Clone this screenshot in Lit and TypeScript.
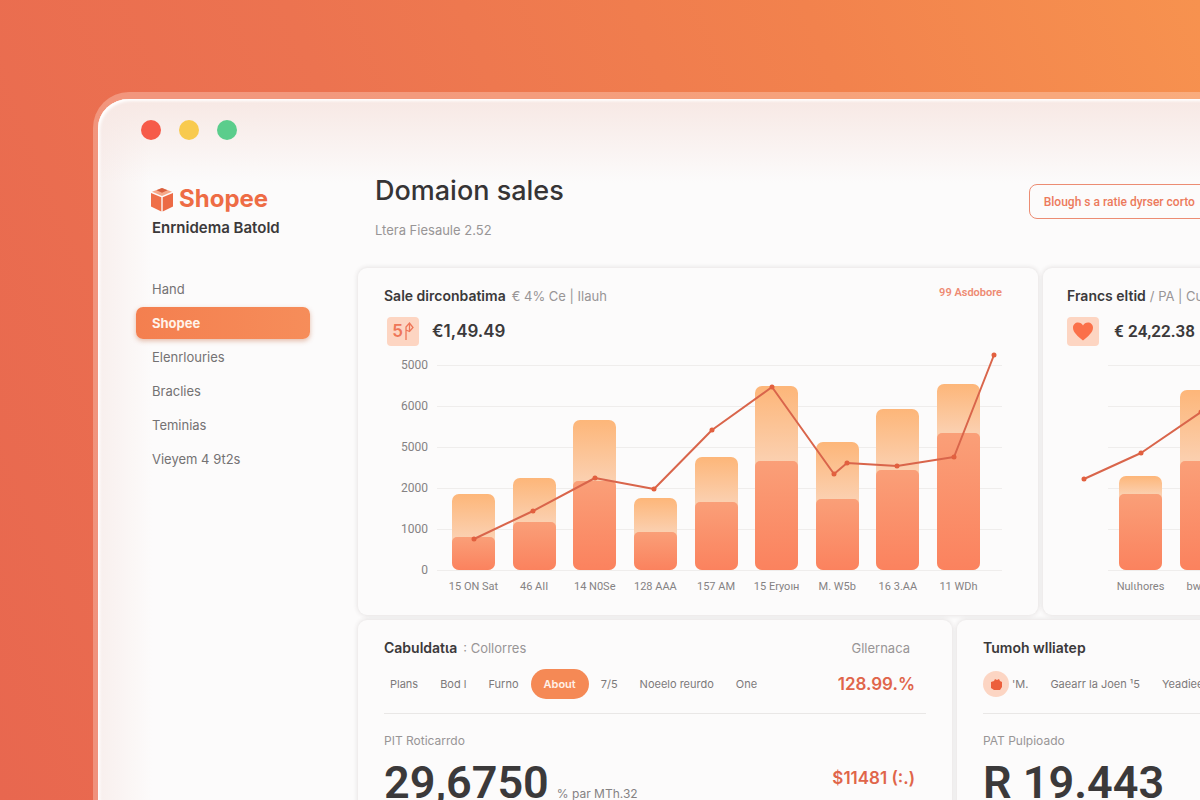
import { LitElement, html, svg, css } from "lit";
import { customElement, property, state } from "lit/decorators.js";
import { classMap } from "lit/directives/class-map.js";

type Bar = { label: string; total: number; part: number };
type Point = [number, number];

/** Stacked bars with a trend line; bar values are percentages of the plot height. */
@customElement("sales-chart")
class SalesChart extends LitElement {
  @property({ attribute: false }) bars: Bar[] = [];
  @property({ attribute: false }) ticks: string[] = [];
  @property({ attribute: false }) line: Point[] = [];
  @property({ attribute: false }) box: Point = [565, 205];

  static styles = css`
    :host {
      display: flex;
      gap: 9px;
      font-family: Roboto, "Liberation Sans", sans-serif;
      color: #858283;
    }
    .ticks {
      width: 32px;
      height: 221px;
      margin-top: -8px;
      display: flex;
      flex-direction: column;
      justify-content: space-between;
      text-align: right;
      font-size: 12px;
      line-height: 16px;
    }
    .area {
      flex: 1;
      min-width: 0;
    }
    .plot {
      display: grid;
      height: 205px;
    }
    .plot > * {
      grid-area: 1 / 1;
    }
    .grid {
      display: flex;
      flex-direction: column;
      justify-content: space-between;
      margin-bottom: -1px;
    }
    .rule {
      height: 1px;
      background: #efedec;
    }
    .bars,
    .labels {
      display: flex;
      justify-content: space-between;
      padding: var(--bars-inset, 0 22px 0 15px);
    }
    .bar {
      width: 43px;
      align-self: end;
      display: flex;
      align-items: end;
      border-radius: 7px;
      background: linear-gradient(#fdb679, #fbd0b0 var(--seam));
      overflow: hidden;
    }
    .part {
      width: 100%;
      border-radius: 5px;
      background: linear-gradient(#fa9f78, #fb825e);
    }
    svg {
      width: 100%;
      height: 100%;
      overflow: visible;
    }
    path {
      fill: none;
      stroke: #d9654b;
      stroke-width: 2;
      stroke-linejoin: round;
      vector-effect: non-scaling-stroke;
    }
    .dots {
      stroke: #e2603f;
      stroke-width: 5;
      stroke-linecap: round;
    }
    .labels {
      padding-top: 9px;
      font-size: 11px;
      line-height: 16px;
    }
    .label {
      width: 43px;
      display: flex;
      justify-content: center;
      white-space: nowrap;
    }
  `;

  render() {
    const [w, h] = this.box;
    return html`
      <div class="ticks">${this.ticks.map((t) => html`<span>${t}</span>`)}</div>
      <div class="area">
        <div class="plot">
          <div class="grid">${[0, 1, 2, 3, 4, 5].map(() => html`<div class="rule"></div>`)}</div>
          <div class="bars">
            ${this.bars.map((b) => {
              const share = (b.part / b.total) * 100;
              return html`<div class="bar" style="height:${b.total}%;--seam:${100 - share}%">
                <div class="part" style="height:${share}%"></div>
              </div>`;
            })}
          </div>
          <svg viewBox="0 0 ${w} ${h}" preserveAspectRatio="none" aria-hidden="true">
            ${svg`<path d="M${this.line.map((p) => p.join(" ")).join("L")}"></path>
            <path class="dots" d="${this.line.map((p) => `M${p.join(" ")}h0.01`).join("")}"></path>`}
          </svg>
        </div>
        <div class="labels">${this.bars.map((b) => html`<span class="label">${b.label}</span>`)}</div>
      </div>
    `;
  }
}

const SALES: Bar[] = [
  { label: "15 ON Sat", total: 37, part: 16 },
  { label: "46 AII", total: 45, part: 23.5 },
  { label: "14 N0Se", total: 73, part: 43.5 },
  { label: "128 AAA", total: 35, part: 18.5 },
  { label: "157 AM", total: 55, part: 33 },
  { label: "15 Eryoıн", total: 90, part: 53 },
  { label: "M. W5b", total: 62.5, part: 34.5 },
  { label: "16 3.AA", total: 78.5, part: 49 },
  { label: "11 WDh", total: 90.5, part: 67 },
];

const SALES_LINE: Point[] = [
  [37, 174], [96, 146], [158, 113], [217, 124], [275, 65], [335, 22],
  [397, 109], [410, 98], [460, 101], [517, 92], [557, -10],
];

const FRANCS: Bar[] = [
  { label: "Nulιhores", total: 46, part: 37 },
  { label: "bwera", total: 88, part: 53 },
  { label: "Juen", total: 70, part: 45 },
  { label: "Bral", total: 58, part: 30 },
  { label: "Tem", total: 80, part: 50 },
];

const FRANCS_LINE: Point[] = [[-24, 114], [33, 88], [93, 47], [155, 70], [215, 30], [280, 52]];

@customElement("app-root")
class AppRoot extends LitElement {
  @state() private page = "Shopee";
  @state() private tab = "About";

  static styles = css`
    :host {
      display: flex;
      box-sizing: border-box;
      height: 100vh;
      padding: 92px 0 0 93px;
      overflow: hidden;
      background: linear-gradient(68deg, #e8674f 0%, #ec7350 40%, #f2824d 74%, #f7924f 100%);
      font-family: Inter, "Liberation Sans", sans-serif;
      color: #3b393a;
    }
    * {
      box-sizing: border-box;
    }
    h1,
    h2,
    p {
      margin: 0;
      font-weight: 400;
    }
    button {
      font: inherit;
      border: 0;
      background: none;
      padding: 0;
      text-align: left;
      cursor: pointer;
    }
    .window {
      flex: none;
      width: calc(100% + 312px);
      border: solid rgba(255, 225, 215, 0.34);
      border-width: 7px 5px 0;
      border-radius: 36px 36px 0 0;
      background:
        linear-gradient(#f7e8e4, rgba(252, 251, 251, 0) 84px),
        linear-gradient(90deg, #f8efed, rgba(252, 251, 251, 0) 54px),
        #fcfbfb;
      background-clip: padding-box;
      box-shadow: inset 2px 2px 3px #ffffff;
    }
    .lights {
      display: flex;
      gap: 18px;
      padding: 21px 0 0 43px;
    }
    .light {
      width: 20px;
      height: 20px;
      border-radius: 50%;
    }
    .red {
      background: #f65b49;
    }
    .yellow {
      background: #f8ca4e;
    }
    .green {
      background: #5bcd8c;
    }
    .body {
      display: flex;
      gap: 48px;
      padding: 13px 24px 0 38px;
    }
    .side {
      width: 174px;
      padding-top: 31px;
    }
    .logo {
      display: flex;
      align-items: center;
      gap: 5px;
      padding-left: 14px;
      font-size: 24px;
      line-height: 30px;
      font-weight: 700;
      color: #ee6c45;
    }
    .logo svg {
      width: 24px;
      height: 25px;
    }
    .shop {
      padding-left: 16px;
      font-size: 15px;
      line-height: 28px;
      font-weight: 600;
      white-space: nowrap;
    }
    .nav {
      display: flex;
      flex-direction: column;
      gap: 2px;
      margin-top: 31px;
      font-size: 13px;
    }
    .nav a {
      line-height: 32px;
      padding: 0 16px;
      color: #747273;
      text-decoration: none;
      border-radius: 7px;
    }
    .nav a.on {
      background: linear-gradient(90deg, #f47f4f, #f68d5a);
      color: #fff3ea;
      font-weight: 700;
      box-shadow: 0 2px 5px rgba(200, 110, 70, 0.45);
    }
    .main {
      flex: 1;
      min-width: 0;
    }
    .head {
      display: flex;
      justify-content: space-between;
      align-items: start;
      height: 115px;
      padding-left: 17px;
    }
    h1 {
      font-size: 27px;
      line-height: 36px;
      padding-top: 20px;
      font-weight: 500;
      color: #363435;
    }
    .sub {
      font-size: 13px;
      line-height: 20px;
      padding-top: 11px;
      color: #989596;
    }
    .export {
      width: 41%;
      height: 35px;
      margin-top: 31px;
      padding: 0 14px;
      border: 1px solid #ec8c73;
      border-radius: 8px;
      color: #ec7a5c;
      font-family: Roboto, "Liberation Sans", sans-serif;
      font-size: 12px;
      font-weight: 500;
      white-space: nowrap;
    }
    .row {
      display: grid;
      gap: 5px;
      margin-bottom: 5px;
    }
    .charts {
      grid-template-columns: 680fr 440fr;
    }
    .totals {
      grid-template-columns: 594fr 526fr;
    }
    .card {
      min-width: 0;
      border-radius: 9px;
      background: #fcfbfb;
      box-shadow: 0 0 4px 1px rgba(60, 50, 50, 0.11);
      padding: 17px 36px 20px 26px;
    }
    .card.narrow {
      padding-left: 24px;
    }
    .title {
      display: flex;
      align-items: baseline;
      gap: 6px;
      white-space: nowrap;
      font-size: 14px;
      line-height: 22px;
    }
    .narrow .title {
      gap: 4px;
    }
    h2 {
      font-size: 14px;
      line-height: 22px;
      font-weight: 600;
    }
    .muted {
      color: #989596;
      font-size: 13px;
    }
    .more {
      align-self: start;
      margin-left: auto;
      font-family: Roboto, "Liberation Sans", sans-serif;
      font-size: 11px;
      line-height: 16px;
      font-weight: 600;
      color: #ee8a72;
      text-decoration: none;
    }
    .stat {
      display: flex;
      align-items: center;
      gap: 13px;
      height: 28px;
      margin: 10px 0 20px 3px;
      font-size: 17px;
      font-weight: 600;
    }
    .narrow .stat {
      margin-left: 0;
      font-family: Roboto, "Liberation Sans", sans-serif;
      gap: 15px;
    }
    .badge {
      display: flex;
      align-items: center;
      justify-content: center;
      width: 32px;
      height: 29px;
      border-radius: 4px;
      background: #fdd5c2;
      color: #ee7658;
      font-size: 17px;
      font-weight: 600;
    }
    .badge .mark {
      width: 11px;
      height: 20px;
    }
    .heart {
      width: 22px;
      height: 19px;
    }
    .wide-chart {
      margin-left: 12px;
    }
    .short-chart {
      --bars-inset: 0 41px 0 11px;
    }
    .tabs {
      display: flex;
      align-items: center;
      gap: 2px;
      flex: 1;
      margin-left: -4px;
      font-size: 11px;
      color: #7c797a;
    }
    .tabs button {
      height: 30px;
      padding: 0 10px;
      color: inherit;
      white-space: nowrap;
      border-radius: 15px;
    }
    .tabs button.on {
      padding: 0 13px;
      background: #f58955;
      color: #fff1e8;
      font-weight: 600;
    }
    .line {
      display: flex;
      align-items: center;
      height: 30px;
      margin-top: 10px;
    }
    .divided {
      padding-bottom: 14px;
      border-bottom: 1px solid #e9e7e6;
      height: 45px;
    }
    .total {
      padding: 17px 26px 20px 26px;
    }
    .total .right {
      margin: 0 16px 0 auto;
    }
    .total .rate {
      margin-right: 11px;
      font-size: 17px;
      font-weight: 600;
      color: #e0654a;
    }
    .small {
      font-size: 12px;
      line-height: 20px;
      margin-top: 17px;
      color: #989596;
    }
    .figure {
      display: flex;
      align-items: baseline;
      gap: 8px;
      margin-top: 6px;
      white-space: nowrap;
    }
    .big {
      font-family: Roboto, "Liberation Sans", sans-serif;
      font-size: 45px;
      line-height: 52px;
      font-weight: 600;
    }
    .unit {
      font-size: 12px;
      line-height: 16px;
      color: #858283;
    }
    .money {
      align-self: start;
      line-height: 42px;
    }
    .disc {
      flex: none;
      display: flex;
      align-items: center;
      justify-content: center;
      width: 26px;
      height: 26px;
      border-radius: 50%;
      background: #fcd5c3;
      margin-right: -3px;
    }
    .disc svg {
      width: 13px;
      height: 13px;
    }
  `;

  private go(e: Event, page: string) {
    e.preventDefault();
    this.page = page;
  }

  private link(name: string) {
    return html`<a href="#" class=${classMap({ on: this.page === name })} @click=${(e: Event) => this.go(e, name)}>${name}</a>`;
  }

  private tabButton(name: string) {
    return html`<button class=${classMap({ on: this.tab === name })} @click=${() => (this.tab = name)}>${name}</button>`;
  }

  render() {
    return html`
      <div class="window">
        <div class="lights">
          <span class="light red"></span><span class="light yellow"></span><span class="light green"></span>
        </div>
        <div class="body">
          <aside class="side">
            <div class="logo">
              <svg viewBox="0 0 24 25" aria-hidden="true">
                <path d="M12 1 L22 4.800 L12 9 L2 4.800Z" fill="#f6a98a" />
                <path d="M12 1 L17.500 3.200 L12 5.800 L6.500 3.200Z" fill="#d9603f" />
                <path d="M1 6 L11.300 10.200 V24.500 L1 19.500Z" fill="#ef6f48" />
                <path d="M23 6 L12.700 10.200 V24.500 L23 19.500Z" fill="#ec6a45" />
              </svg>
              Shopee
            </div>
            <div class="shop">Enrnidema Batold</div>
            <nav class="nav">
              ${["Hand", "Shopee", "Elenrlouries", "Braclies", "Teminias", "Vieyem 4 9t2s"].map((n) => this.link(n))}
            </nav>
          </aside>
          <main class="main">
            <header class="head">
              <div>
                <h1>Domaion sales</h1>
                <p class="sub">Ltera Fiesaule 2.52</p>
              </div>
              <button class="export">Blough s a ratie dyrser corto</button>
            </header>
            <div class="row charts">
              <section class="card">
                <div class="title">
                  <h2>Sale dirconbatima</h2>
                  <span class="muted">€ 4% Ce | Ilauh</span>
                  <a class="more" href="#">99 Asdobore</a>
                </div>
                <div class="stat">
                  <span class="badge">
                    5
                    <svg class="mark" viewBox="0 0 11 20" aria-hidden="true">
                      <path d="M3 19V6L6.500 2L10 6.500L6.500 10.500L3 9M6.500 2V10" fill="none" stroke="#ee7658" stroke-width="1.3" />
                    </svg>
                  </span>
                  €1,49.49
                </div>
                <sales-chart
                  class="wide-chart"
                  .bars=${SALES}
                  .line=${SALES_LINE}
                  .ticks=${["5000", "6000", "5000", "2000", "1000", "0"]}
                ></sales-chart>
              </section>
              <section class="card narrow">
                <div class="title">
                  <h2>Francs eltid</h2>
                  <span class="muted">/ PA | Cu</span>
                </div>
                <div class="stat">
                  <span class="badge">
                    <svg class="heart" viewBox="0 0 22 19" aria-hidden="true">
                      <path d="M11 18.500C6 14.500 1 10.500 1 5.800C1 2.500 3.400.500 6 .500C8.200.500 10 1.600 11 3.500C12 1.600 13.800.500 16 .500C18.600.500 21 2.500 21 5.800C21 10.500 16 14.500 11 18.500Z" fill="#fb7049" />
                    </svg>
                  </span>
                  € 24,22.38
                </div>
                <sales-chart class="short-chart" .bars=${FRANCS} .line=${FRANCS_LINE} .box=${[339, 205]}></sales-chart>
              </section>
            </div>
            <div class="row totals">
              <section class="card total">
                <div class="title">
                  <h2>Cabuldatιa</h2>
                  <span class="muted">: Collorres</span>
                  <span class="muted right">Gllernaca</span>
                </div>
                <div class="line divided">
                  <div class="tabs">
                    ${["Plans", "Bod l", "Furno", "About", "7/5", "Noeelo reurdo", "One"].map((t) => this.tabButton(t))}
                  </div>
                  <span class="rate right">128.99.%</span>
                </div>
                <p class="small">PIT Roticarrdo</p>
                <div class="figure">
                  <span class="big">29,6750</span>
                  <span class="unit">% par MTh.32</span>
                  <span class="rate money right">$11481 (:.)</span>
                </div>
              </section>
              <section class="card total">
                <div class="title"><h2>Tumoh wlliatep</h2></div>
                <div class="line divided">
                  <span class="disc">
                    <svg viewBox="0 0 13 13" aria-hidden="true">
                      <path d="M1 4L4 3L5 1L7 2L9 1L10 3L12 4V9L10 12H4L1 10Z" fill="#ec5f3c" />
                    </svg>
                  </span>
                  <div class="tabs">${["'M.", "Gaearr la Joen ¹5", "Yeadiee"].map((t) => this.tabButton(t))}</div>
                </div>
                <p class="small">PAT Pulpioado</p>
                <div class="figure"><span class="big">R 19.443</span></div>
              </section>
            </div>
          </main>
        </div>
      </div>
    `;
  }
}
